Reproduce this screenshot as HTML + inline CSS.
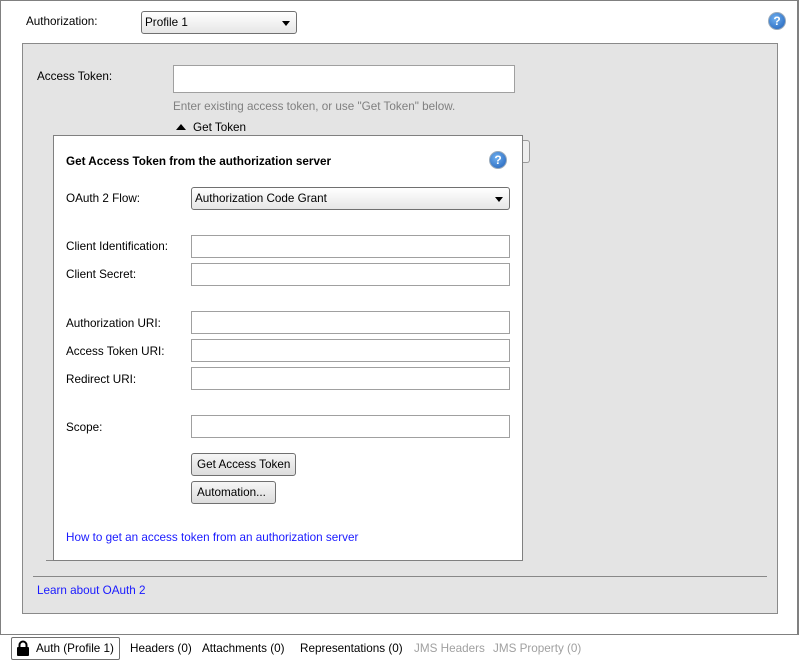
<!DOCTYPE html>
<html><head><style>
*{box-sizing:border-box;margin:0;padding:0}
body{width:799px;height:663px;background:#fff;font-family:"Liberation Sans","DejaVu Sans",sans-serif;font-size:11.7px;color:#000;position:relative;overflow:hidden}
.a{position:absolute;white-space:nowrap}
.inp{position:absolute;background:#fff;border:1px solid #a0a0a0;height:23px}
.btn{position:absolute;border:1px solid #707070;border-radius:3px;background:linear-gradient(#f6f6f6,#dcdcdc);height:23px;line-height:21px;padding:0 5px;white-space:nowrap;overflow:hidden}
.sel{position:absolute;border:1px solid #707070;border-radius:3px;background:linear-gradient(#fff,#e6e6e6);height:23px;line-height:21px;padding-left:3px}
.sel:after{content:"";position:absolute;right:6px;top:9px;border-left:4px solid transparent;border-right:4px solid transparent;border-top:5px solid #000}
.help{position:absolute;width:18px;height:18px;border-radius:50%;background:radial-gradient(circle at 40% 35%,#6fb0f0,#1f5fb8);border:1px solid #9ab;color:#fff;font-weight:bold;font-size:12px;text-align:center;line-height:16px}
.lnk{color:#1a1aff}
</style></head><body>
<div class="a" style="left:0;top:0;width:799px;height:635px;border:1px solid #808080;border-right:2px solid #808080"></div>
<div class="a" style="left:26px;top:15px">Authorization:</div>
<div class="sel" style="left:141px;top:11px;width:156px">Profile 1</div>
<div class="help" style="left:768px;top:12px">?</div>
<div class="a" style="left:22px;top:43px;width:756px;height:571px;background:#e4e4e4;border:1px solid #8a8a8a"></div>
<div class="a" style="left:37px;top:70px">Access Token:</div>
<div class="inp" style="left:173px;top:65px;width:342px;height:28px"></div>
<div class="a" style="left:173px;top:100px;color:#808080">Enter existing access token, or use "Get Token" below.</div>
<div class="a" style="left:176px;top:124px;border-left:5px solid transparent;border-right:5px solid transparent;border-bottom:6px solid #000;width:0;height:0"></div>
<div class="a" style="left:193px;top:121px">Get Token</div>
<div class="a" style="left:515px;top:140px;width:15px;height:23px;border:1px solid #999;border-left:none;border-radius:0 3px 3px 0;background:#eee"></div>
<div class="a" style="left:46px;top:560px;width:410px;height:1px;background:#888"></div>
<div class="a" style="left:33px;top:576px;width:734px;height:1px;background:#888"></div>
<div class="a lnk" style="left:37px;top:584px">Learn about OAuth 2</div>
<div class="a" style="left:53px;top:135px;width:470px;height:426px;background:#fff;border:1px solid #808080"></div>
<div class="a" style="left:66px;top:155px;font-weight:bold">Get Access Token from the authorization server</div>
<div class="help" style="left:489px;top:151px">?</div>
<div class="a" style="left:66px;top:192px">OAuth 2 Flow:</div>
<div class="sel" style="left:191px;top:187px;width:319px">Authorization Code Grant</div>
<div class="a" style="left:66px;top:240px">Client Identification:</div>
<div class="inp" style="left:191px;top:235px;width:319px"></div>
<div class="a" style="left:66px;top:268px">Client Secret:</div>
<div class="inp" style="left:191px;top:263px;width:319px"></div>
<div class="a" style="left:66px;top:317px">Authorization URI:</div>
<div class="inp" style="left:191px;top:311px;width:319px"></div>
<div class="a" style="left:66px;top:345px">Access Token URI:</div>
<div class="inp" style="left:191px;top:339px;width:319px"></div>
<div class="a" style="left:66px;top:373px">Redirect URI:</div>
<div class="inp" style="left:191px;top:367px;width:319px"></div>
<div class="a" style="left:66px;top:421px">Scope:</div>
<div class="inp" style="left:191px;top:415px;width:319px"></div>
<div class="btn" style="left:191px;top:453px;width:105px">Get Access Token</div>
<div class="btn" style="left:191px;top:481px;width:85px">Automation...</div>
<div class="a lnk" style="left:66px;top:531px">How to get an access token from an authorization server</div>
<div class="a" style="left:11px;top:637px;width:109px;height:23px;border:1px solid #707070;border-radius:2px;background:#fff"></div>
<svg class="a" style="left:16px;top:640px" width="14" height="16" viewBox="0 0 14 16"><path d="M3.5 7V5a3.5 3.5 0 0 1 7 0v2" fill="none" stroke="#000" stroke-width="2"/><rect x="1" y="7" width="12" height="9" rx="1" fill="#000"/></svg>
<div class="a" style="left:36px;top:642px">Auth (Profile 1)</div>
<div class="a" style="left:130px;top:642px">Headers (0)</div>
<div class="a" style="left:202px;top:642px">Attachments (0)</div>
<div class="a" style="left:300px;top:642px">Representations (0)</div>
<div class="a" style="left:414px;top:642px;color:#a0a0a0">JMS Headers</div>
<div class="a" style="left:493px;top:642px;color:#a0a0a0">JMS Property (0)</div>
</body></html>
